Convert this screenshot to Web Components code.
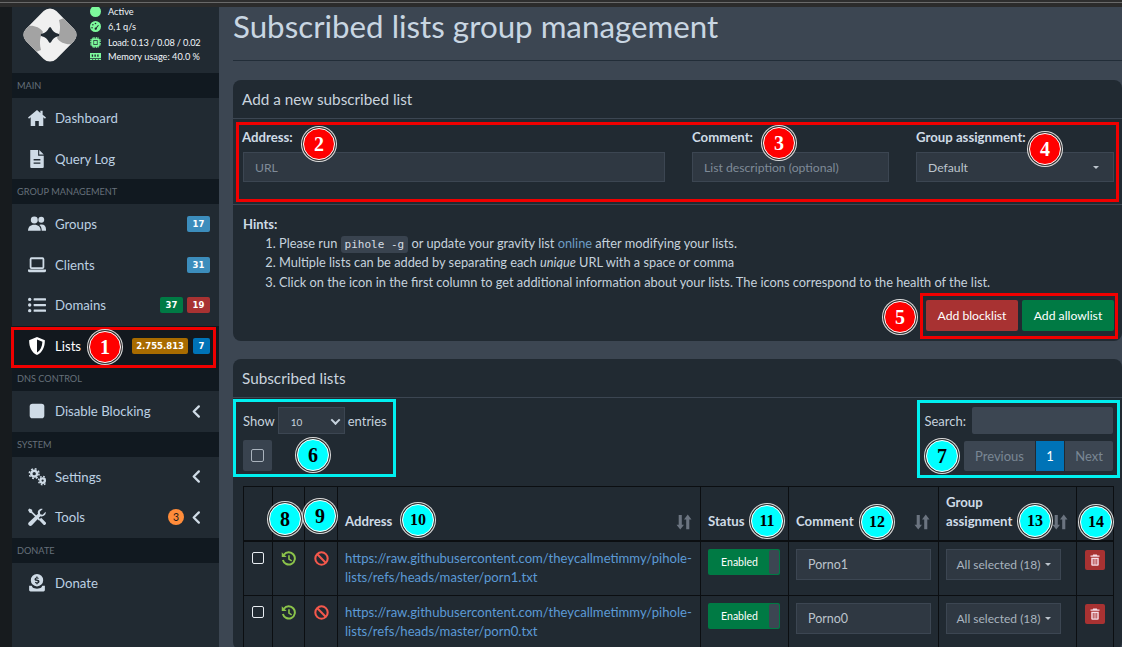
<!DOCTYPE html>
<html lang="en">
<head>
<meta charset="utf-8">
<title>Subscribed lists group management</title>
<style>
  html, body { margin: 0; height: 100%; overflow: hidden; background: #3c4652; }
  body { font: 13px Lato, "Liberation Sans", sans-serif; color: #bcc4cc; }
</style>
</head>
<body>
<pi-app></pi-app>

<script>
const ICONS = {
  home: '<path fill="currentColor" d="M8 .8 0 7.6l.9 1L2.4 7.4V15h4v-4.4h3.2V15h4V7.4l1.5 1.2.9-1L13 5.2V1.6h-2v1.9z"/>',
  file: '<path fill="currentColor" d="M2 0h7v5h5v10a1 1 0 0 1-1 1H3a1 1 0 0 1-1-1zM10 0l4 4h-4zM5 8v1.3h6V8zm0 3v1.3h6V11z" fill-rule="evenodd"/>',
  users: '<g fill="currentColor"><circle cx="5.6" cy="4.4" r="3.1"/><circle cx="11.8" cy="4.2" r="2.6"/><path d="M0 14c0-3.400 2-5.400 5.600-5.400s5.700 2 5.700 5.400z"/><path d="M12.200 14c0-2.400-.7-4-2.100-5.100.7-.3 1.300-.4 2-.4 2.500 0 3.900 1.800 3.900 4.200V14z"/></g>',
  laptop: '<g fill="none" stroke="currentColor" stroke-width="1.600"><rect x="2.300" y="2" width="11.400" height="8.800" rx=".8"/></g><path fill="currentColor" d="M0 12h16v1a1.500 1.500 0 0 1-1.500 1.500h-13A1.500 1.500 0 0 1 0 13z"/>',
  list: '<g fill="currentColor"><circle cx="1.500" cy="3" r="1.500"/><circle cx="1.500" cy="8" r="1.500"/><circle cx="1.500" cy="13" r="1.500"/><rect x="5" y="2" width="11" height="2" rx=".5"/><rect x="5" y="7" width="11" height="2" rx=".5"/><rect x="5" y="12" width="11" height="2" rx=".5"/></g>',
  shield: '<path fill="currentColor" fill-rule="evenodd" d="M8 0 1 2.800C1 9 3.200 13.700 8 16c4.800-2.300 7-7 7-13.200zm0 2.300 4.800 1.900C12.600 8.500 11 12 8 13.700z"/>',
  stop: '<rect x="1.500" y="1.500" width="13" height="13" rx="2.500" fill="currentColor"/>',
  cogs: '<g fill="none" stroke="currentColor"><circle cx="5.500" cy="5" r="2.600" stroke-width="2.200"/><circle cx="5.500" cy="5" r="4.300" stroke-width="1.400" stroke-dasharray="1.700 1.680"/><circle cx="13" cy="11.200" r="2" stroke-width="2"/><circle cx="13" cy="11.200" r="3.600" stroke-width="1.300" stroke-dasharray="1.500 1.330"/></g>',
  tools: '<g fill="currentColor"><path d="M1.300.4 0 1.700l1.400 2.600 1.800.3 6.500 6.500 1.200-1.200L3.900 3.400l-.3-1.800z"/><path d="M15.600 3.300 13 5.900l-2.100-.4-.4-2.100L13.100.8c-1.900-.6-4.200.7-4.400 2.800 0 .6 0 1.100.2 1.500L.8 12.600a1.900 1.900 0 0 0 2.700 2.700l7.500-8c2.500.9 5.500-1.200 4.600-4z"/><path d="m9.800 10.600 1.900-1.900 3.900 3.900a1.300 1.300 0 0 1 0 1.900l-.1.100a1.300 1.300 0 0 1-1.900 0z"/></g>',
  donate: '<path fill="currentColor" fill-rule="evenodd" d="M8 0a5.500 5.500 0 1 1 0 11A5.500 5.500 0 0 1 8 0zM7.400 2.200v.8c-1 .2-1.600.8-1.600 1.600 0 .9.700 1.300 1.500 1.500l1 .3c.3.100.5.200.5.500s-.3.500-.7.500c-.5 0-1-.2-1.400-.5l-.6.800c.4.300.8.500 1.300.6v.9h1.200v-.9c1-.2 1.600-.8 1.600-1.700 0-.9-.7-1.300-1.500-1.500l-1-.3c-.3-.1-.5-.2-.5-.4 0-.3.300-.4.600-.4.400 0 .8.100 1.200.4l.6-.8c-.4-.3-.8-.5-1.200-.5v-.9zM1 10.500h2.300L4 11.800c1 .9 2.500 1.200 4 1.200s3-.3 4-1.200l.7-1.300H15v3.800a1.200 1.200 0 0 1-1.200 1.200H2.200A1.200 1.200 0 0 1 1 14.300z"/>',
  angle: '<path fill="none" stroke="currentColor" stroke-width="2.400" stroke-linecap="round" stroke-linejoin="round" d="M10.500 2.500 5 8l5.500 5.500"/>',
  gauge: '<path fill="currentColor" fill-rule="evenodd" d="M8 0a8 8 0 1 1 0 16A8 8 0 0 1 8 0zm0 2.500a1.200 1.200 0 1 0 0 2.400 1.200 1.200 0 0 0 0-2.400zM4.200 4.500a1.100 1.100 0 1 0 0 2.200 1.100 1.100 0 0 0 0-2.200zm7.600 1.200L8.800 9.400a1.700 1.700 0 1 0 1.100.8l3-3.700zM3 8.800a1.100 1.100 0 1 0 0 2.200 1.100 1.100 0 0 0 0-2.200z"/>',
  chip: '<path fill="currentColor" fill-rule="evenodd" d="M4 0h1.200v2h1.200V0h1.200v2h1.200V0H10v2h1.200V0h1v2A2 2 0 0 1 14 3.800h2V5h-2v1.200h2v1.200h-2v1.200h2v1.200h-2v1.200h2V12h-2a2 2 0 0 1-1.800 2v2h-1v-2H10v2H8.800v-2H7.600v2H6.400v-2H5.200v2H4v-2a2 2 0 0 1-2-2H0v-1.200h2V9.600H0V8.400h2V7.200H0V6h2V4.800H0V3.600h2A2 2 0 0 1 4 2zm1 4.500v7h6v-7z M6 5.500h4v5H6z"/>',
  memory: '<path fill="currentColor" fill-rule="evenodd" d="M0 3h16v7.500H0zm2.500 2v3.500h2V5zm4 0v3.500h2V5zm4 0v3.500h2V5zM0 11.500h3.500V13H0zm4.500 0h3V13h-3zm4 0h3V13h-3zm4 0H16V13h-3.500z"/>',
  history: '<g fill="none" stroke="currentColor" stroke-width="2.100"><path d="M3.100 4A6.500 6.500 0 1 1 2 9.600"/><path stroke-width="1.700" d="M8.500 4.500v4.200l2.900 1.800"/></g><path fill="currentColor" d="M.8 1.300 6 6.300H.8z"/>',
  ban: '<g fill="none" stroke="currentColor" stroke-width="2.200"><circle cx="8" cy="8" r="6.600"/><path d="M3.300 3.300l9.400 9.400"/></g>',
  trash: '<path fill="currentColor" fill-rule="evenodd" d="M5.500.5h5l.6 1.500H14v1.700H2V2h2.900zM3 5h10v9.200A1.500 1.500 0 0 1 11.500 15.700h-7A1.500 1.500 0 0 1 3 14.200zm2 1.500v7.500h1.200V6.500zm2.400 0v7.500h1.200V6.500zm2.400 0v7.500H11V6.500z"/>',
  sort: '<g fill="currentColor"><path d="M2.700 1h3.100v9.800h2.200L4.250 15.600.5 10.800h2.200z"/><path d="M10.200 15.200h3.100V5.400h2.200L11.750.6 8 5.400h2.200z"/></g>'
};

class PiIcon extends HTMLElement {
  connectedCallback() {
    const size = this.getAttribute('size') || 16;
    this.attachShadow({ mode: 'open' });
    this.shadowRoot.innerHTML = `
      <style>
        :host { display: inline-flex; flex: none; width: ${size}px; height: ${size}px; }
        svg { width: 100%; height: 100%; display: block; }
      </style>
      <svg viewBox="0 0 16 16" aria-hidden="true">${ICONS[this.getAttribute('name')] || ''}</svg>`;
  }
}
customElements.define('pi-icon', PiIcon);

class PiNavHeader extends HTMLElement {
  connectedCallback() {
    this.attachShadow({ mode: 'open' });
    this.shadowRoot.innerHTML = `
      <style>
        :host {
          display: flex; align-items: center; height: 25px; padding-left: 5px;
          background: #111920; color: #66707a; font-size: 9.200px; text-transform: uppercase;
        }
      </style>
      <slot></slot>`;
  }
}
customElements.define('pi-nav-header', PiNavHeader);

class PiNavItem extends HTMLElement {
  connectedCallback() {
    this.attachShadow({ mode: 'open' });
    this.shadowRoot.innerHTML = `
      <style>
        :host {
          display: flex; align-items: center; height: 40.500px; padding: 0 9px 0 16px;
          box-sizing: border-box; color: #bcd0e2; font-size: 13.200px;
        }
        :host([active]) { background: #12181e; color: #fff; }
        .ic { width: 27px; display: flex; color: #cfdbe6; }
        :host([active]) .ic { color: #fff; }
        .label { flex: 1; }
        .end { display: flex; align-items: center; gap: 4px; }
        ::slotted(pi-icon) { color: #cfdbe6; margin-right: 6px; }
      </style>
      <span class="ic"><pi-icon name="${this.getAttribute('icon')}" size="${this.getAttribute('size') || 18}"></pi-icon></span>
      <span class="label">${this.getAttribute('label')}</span>
      <span class="end"><slot></slot></span>`;
  }
}
customElements.define('pi-nav-item', PiNavItem);

class PiBadge extends HTMLElement {
  connectedCallback() {
    this.attachShadow({ mode: 'open' });
    this.shadowRoot.innerHTML = `
      <style>
        :host {
          display: inline-flex; align-items: center; justify-content: center; box-sizing: border-box;
          height: 16px; min-width: 23px; padding: 0 4px; border-radius: 2px;
          background: var(--bg, #3c8dbc); color: #fff;
          font: bold 8.500px "DejaVu Sans", sans-serif;
        }
        :host([round]) {
          height: 16px; width: 16px; min-width: 0; padding: 0; border-radius: 50%;
          font: 10.500px Lato, sans-serif; color: #1b1b1b; margin-right: 1px;
        }
      </style>
      <slot></slot>`;
  }
}
customElements.define('pi-badge', PiBadge);

class PiSidebar extends HTMLElement {
  connectedCallback() {
    this.attachShadow({ mode: 'open' });
    this.shadowRoot.innerHTML = `
      <style>
        :host { display: block; background: #212a32; overflow: hidden; }
        .panel { display: flex; height: 66px; box-sizing: border-box; padding-left: 11px; }
        .logo { width: 54px; height: 56px; flex: none; }
        .status {
          margin-left: 13px; display: flex; flex-direction: column;
          font: 9.200px Lato, sans-serif; color: #f2f6fa;
        }
        .status div { display: flex; align-items: center; height: 15px; gap: 7px; }
        .status pi-icon { color: #7dfa9c; width: 11px; }
        .dot { width: 11px; height: 11px; border-radius: 50%; background: #7dfa9c; flex: none; }
      </style>
      <div class="panel">
        <svg class="logo" viewBox="0 0 54 56" aria-hidden="true">
          <defs><clipPath id="diamond"><rect x="5.600" y="6.600" width="42.800" height="42.800" rx="9" transform="rotate(45 27 28)"/></clipPath></defs>
          <g clip-path="url(#diamond)">
            <rect width="54" height="56" fill="#f0f0f0"/>
            <path fill="#a3a3a3" d="M-2 28 5 19C10 18 17 20 20 25 17 29 16 36 18 43L13 45-2 35z"/>
            <path fill="#a3a3a3" transform="rotate(180 27 28)" d="M-2 28 5 19C10 18 17 20 20 25 17 29 16 36 18 43L13 45-2 35z"/>
          </g>
          <path fill="#212a32" d="M27 21.500C28.500 25 30.500 27 35 28 30.500 29 28.500 31 27 34.500 25.500 31 23.500 29 19 28 23.500 27 25.500 25 27 21.500z" stroke="#212a32" stroke-width="2.500" stroke-linejoin="round"/>
        </svg>
        <div class="status">
          <div style="height:12px;margin-top:-2px"><span class="dot"></span>Active</div>
          <div style="height:18px"><pi-icon name="gauge" size="11"></pi-icon>6,1 q/s</div>
          <div style="height:14px"><pi-icon name="chip" size="11"></pi-icon><span style="letter-spacing:-.15px">Load: 0.13 / 0.08 / 0.02</span></div>
          <div><pi-icon name="memory" size="11"></pi-icon>Memory usage: 40.0 %</div>
        </div>
      </div>
      <pi-nav-header>Main</pi-nav-header>
      <pi-nav-item icon="home" label="Dashboard"></pi-nav-item>
      <pi-nav-item icon="file" label="Query Log"></pi-nav-item>
      <pi-nav-header>Group Management</pi-nav-header>
      <pi-nav-item icon="users" label="Groups"><pi-badge>17</pi-badge></pi-nav-item>
      <pi-nav-item icon="laptop" label="Clients"><pi-badge>31</pi-badge></pi-nav-item>
      <pi-nav-item icon="list" label="Domains"><pi-badge style="--bg:#007a44">37</pi-badge><pi-badge style="--bg:#a83232">19</pi-badge></pi-nav-item>
      <pi-nav-item icon="shield" label="Lists" active><pi-badge style="--bg:#a86b00;margin-right:1px">2.755.813</pi-badge><pi-badge style="--bg:#0073b7;min-width:17px">7</pi-badge></pi-nav-item>
      <pi-nav-header>DNS Control</pi-nav-header>
      <pi-nav-item icon="stop" label="Disable Blocking"><pi-icon name="angle" size="15"></pi-icon></pi-nav-item>
      <pi-nav-header>System</pi-nav-header>
      <pi-nav-item icon="cogs" label="Settings"><pi-icon name="angle" size="15"></pi-icon></pi-nav-item>
      <pi-nav-item icon="tools" label="Tools"><pi-badge round style="--bg:#ff8c3a">3</pi-badge><pi-icon name="angle" size="15"></pi-icon></pi-nav-item>
      <pi-nav-header>Donate</pi-nav-header>
      <pi-nav-item icon="donate" label="Donate"></pi-nav-item>`;
  }
}
customElements.define('pi-sidebar', PiSidebar);

class PiCard extends HTMLElement {
  connectedCallback() {
    this.attachShadow({ mode: 'open' });
    this.shadowRoot.innerHTML = `
      <style>
        :host { display: block; background: #212a32; border-radius: 8px; }
        header {
          height: 38px; padding-left: 9px; display: flex; align-items: center;
          border-bottom: 1px solid #3c4652; font-size: 15.300px; color: #c9d4de;
        }
      </style>
      <header>${this.getAttribute('heading')}</header>
      <slot></slot>`;
  }
}
customElements.define('pi-card', PiCard);

class PiAddForm extends HTMLElement {
  connectedCallback() {
    this.attachShadow({ mode: 'open' });
    this.shadowRoot.innerHTML = `
      <style>
        :host { display: block; color: #bcd0e2; }
        .fields {
          display: grid; grid-template-columns: 422px 197px 198px; column-gap: 27px;
          padding: 10px 8px 0 10px; height: 75px; border-bottom: 1px solid #3c4652;
        }
        label { display: block; font-weight: bold; font-size: 13.200px; color: #cfdbe6; line-height: 17px; margin: 0 0 6px; }
        .control {
          height: 30px; box-sizing: border-box; display: flex; align-items: center; padding: 0 11px;
          background: #2f3842; border: 1px solid #3c4652; color: #7f8b98; font-size: 12.200px;
        }
        .control.sel { color: #bcc4cc; justify-content: space-between; }
        .caret { width: 0; height: 0; border: 3.500px solid transparent; border-top-color: #bcc4cc; border-bottom: 0; margin-right: 3px; }
        .hints { padding: 10px 10px 0; font-size: 13px; line-height: 19.500px; color: #c6d2dd; height: 136px; box-sizing: border-box; }
        .hints b { color: #cfdbe6; }
        ol { margin: -1px 0 0; padding-left: 36px; font-size: 12.800px; }
        code {
          font: 11px "DejaVu Sans Mono", monospace; background: #39434f; padding: 2px 4px;
          border-radius: 3px; color: #d5dce3;
        }
        a { color: #6d9dc5; text-decoration: none; }
        .actions { display: flex; justify-content: flex-end; gap: 4px; margin: 8px -2px 0 0; }
        button {
          width: 92px; height: 31px; border: 0; border-radius: 2px; color: #fff;
          font: 12.200px Lato, sans-serif; padding: 0;
        }
      </style>
      <div class="fields">
        <div><label style="margin-left:-1px">Address:</label><div class="control">URL</div></div>
        <div><label>Comment:</label><div class="control">List description (optional)</div></div>
        <div><label>Group assignment:</label><div class="control sel">Default<span class="caret"></span></div></div>
      </div>
      <div class="hints">
        <b>Hints:</b>
        <ol>
          <li>Please run <code>pihole -g</code> or update your gravity list <a>online</a> after modifying your lists.</li>
          <li>Multiple lists can be added by separating each <i>unique</i> URL with a space or comma</li>
          <li>Click on the icon in the first column to get additional information about your lists. The icons correspond to the health of the list.</li>
        </ol>
        <div class="actions">
          <button style="background:#a83232">Add blocklist</button>
          <button style="background:#007a44">Add allowlist</button>
        </div>
      </div>`;
  }
}
customElements.define('pi-add-form', PiAddForm);

class PiListsTable extends HTMLElement {
  row(url1, url2, comment) {
    return `<tr>
      <td class="c"><span class="check"></span></td>
      <td class="c"><pi-icon name="history" size="15" style="color:#8bc34a"></pi-icon></td>
      <td class="c"><pi-icon name="ban" size="15" style="color:#f4584c"></pi-icon></td>
      <td class="addr"><a>${url1}<br>${url2}</a></td>
      <td><div class="toggle"><span>Enabled</span><i></i></div></td>
      <td><div class="inp">${comment}</div></td>
      <td><div class="inp drop">All selected (18)<span class="caret"></span></div></td>
      <td class="c"><span class="del"><pi-icon name="trash" size="12"></pi-icon></span></td>
    </tr>`;
  }
  connectedCallback() {
    this.attachShadow({ mode: 'open' });
    this.shadowRoot.innerHTML = `
      <style>
        :host { display: block; padding: 0 9px 0 10px; }
        .top { display: flex; justify-content: space-between; height: 88px; padding-top: 9px; box-sizing: border-box; color: #c6d2dd; font-size: 13px; }
        .row { display: flex; align-items: center; height: 27px; gap: 3px; }
        .sel {
          width: 67px; height: 27px; box-sizing: border-box; background: #2f3842; border: 1px solid #3c4652;
          display: flex; align-items: center; justify-content: space-between; padding: 2px 5px 0 12px; font-size: 10px; color: #c6d2dd;
        }
        .chev { width: 5px; height: 5px; border: solid #c6d2dd; border-width: 0 2px 2px 0; transform: rotate(45deg) translate(-1px,-1px); }
        .sq { width: 29px; height: 31px; margin-top: 6px; background: #39434f; border-radius: 2px; display: flex; align-items: center; justify-content: center; }
        .sq span { width: 11px; height: 11px; border: 1.500px solid #aab3bd; border-radius: 2px; }
        .right { display: flex; flex-direction: column; align-items: flex-end; }
        .search { width: 141px; height: 27px; background: #3c4652; border-radius: 2px; margin-left: 3px; }
        .pager { display: flex; height: 30px; margin-top: 7px; gap: 1px; font-size: 13px; color: #7a8794; }
        .pager span { display: flex; align-items: center; justify-content: center; background: #3c4652; }
        table { border-collapse: collapse; table-layout: fixed; width: 870px; }
        th, td { border: 1px solid #0b0e11; padding: 0 7px; }
        th {
          height: 44px; text-align: left; vertical-align: bottom; padding-bottom: 9px; font-size: 13.200px; line-height: 19px;
          color: #cfdbe6; border-bottom-width: 2px; position: relative;
        }
        th pi-icon { position: absolute; right: 8px; bottom: 10px; color: #6b7480; }
        td { height: 54px; vertical-align: top; padding-top: 7px; box-sizing: border-box; }
        td.c { text-align: center; padding-left: 0; padding-right: 0; }
        td.c pi-icon { vertical-align: top; margin-top: 2px; }
        td.addr { padding: 0 6px 0 7px; vertical-align: middle; line-height: 19.500px; font-size: 13.100px; }
        a { color: #5c9ad6; }
        .check { display: inline-block; width: 10px; height: 10px; border: 1px solid #e8edf2; border-radius: 2px; margin-top: 3px; }
        .toggle {
          width: 72px; height: 26px; background: #007a44; border-radius: 2px; display: flex; align-items: center;
          color: #fff; font-size: 10.500px;
        }
        .toggle span { flex: 1; text-align: center; padding-left: 2px; }
        .toggle i { flex: none; width: 10px; height: 24px; background: #3c4652; border-radius: 2px; margin-right: 1px; }
        .inp {
          height: 31px; box-sizing: border-box; background: #2f3842; border: 1px solid #3c4652; display: flex;
          align-items: center; padding: 0 11px; font-size: 12.500px; color: #bcc4cc;
        }
        .drop { justify-content: center; gap: 4px; padding: 0; font-size: 12px; color: #a9b4bf; width: 115px; }
        .caret { width: 0; height: 0; border: 3px solid transparent; border-top-color: #bcc4cc; border-bottom: 0; }
        .del { display: inline-flex; width: 20px; height: 20px; background: #a83232; border-radius: 2px; align-items: center; justify-content: center; color: #f5dce6; margin-top: 1px; }
        .del pi-icon { margin-top: 0 !important; }
      </style>
      <div class="top">
        <div>
          <div class="row">Show <div class="sel">10<span class="chev"></span></div> entries</div>
          <div class="sq"><span></span></div>
        </div>
        <div class="right">
          <div class="row">Search: <div class="search"></div></div>
          <div class="pager">
            <span style="width:71px;border-radius:2px 0 0 2px">Previous</span>
            <span style="width:28px;background:#0073b7;color:#fff">1</span>
            <span style="width:48px;border-radius:0 2px 2px 0">Next</span>
          </div>
        </div>
      </div>
      <table>
        <colgroup>
          <col style="width:29px"><col style="width:32px"><col style="width:33px"><col style="width:363px">
          <col style="width:88px"><col style="width:150px"><col style="width:138px"><col style="width:37px">
        </colgroup>
        <thead>
          <tr>
            <th></th><th></th><th></th>
            <th>Address<pi-icon name="sort" size="16"></pi-icon></th>
            <th>Status</th>
            <th>Comment<pi-icon name="sort" size="16"></pi-icon></th>
            <th>Group<br>assignment<pi-icon name="sort" size="16"></pi-icon></th>
            <th></th>
          </tr>
        </thead>
        <tbody>
          ${this.row('https://raw.githubusercontent.com/theycallmetimmy/pihole-', 'lists/refs/heads/master/porn1.txt', 'Porno1')}
          ${this.row('https://raw.githubusercontent.com/theycallmetimmy/pihole-', 'lists/refs/heads/master/porn0.txt', 'Porno0')}
        </tbody>
      </table>`;
  }
}
customElements.define('pi-lists-table', PiListsTable);

// numbered markers and frames drawn over the screenshot
class PiMarker extends HTMLElement {
  connectedCallback() {
    const [x, y] = this.getAttribute('at').split(',').map(Number);
    const cyan = this.hasAttribute('cyan');
    this.attachShadow({ mode: 'open' });
    this.shadowRoot.innerHTML = `
      <style>
        :host {
          position: absolute; left: ${x - 16}px; top: ${y - 16}px; width: 32px; height: 32px; box-sizing: border-box;
          display: flex; align-items: center; justify-content: center; border-radius: 50%;
          background: ${cyan ? '#00ffff' : '#ff0000'}; color: ${cyan ? '#000' : '#fff'};
          border: 1px solid #fff; box-shadow: 0 0 0 1px #333, 0 0 0 2px #ddd;
          font: bold ${this.textContent.length > 1 ? 16 : 20}px "Liberation Serif", serif;
        }
      </style>
      <slot></slot>`;
  }
}
customElements.define('pi-marker', PiMarker);

class PiFrame extends HTMLElement {
  connectedCallback() {
    const [x, y, w, h] = this.getAttribute('box').split(',').map(Number);
    this.attachShadow({ mode: 'open' });
    this.shadowRoot.innerHTML = `
      <style>
        :host {
          position: absolute; left: ${x}px; top: ${y}px; width: ${w}px; height: ${h}px; box-sizing: border-box;
          border: 3px solid ${this.getAttribute('color')}; pointer-events: none;
        }
      </style>`;
  }
}
customElements.define('pi-frame', PiFrame);

class PiApp extends HTMLElement {
  connectedCallback() {
    this.attachShadow({ mode: 'open' });
    this.shadowRoot.innerHTML = `
      <style>
        :host { display: block; position: relative; width: 1122px; height: 647px; overflow: hidden; }
        .chrome { height: 7px; background: linear-gradient(#2e2e2e 0 2px, #6a6a6a 2px 3px, #2b2b2b 3px); }
        .shell { display: grid; grid-template-columns: 12px 207px 1fr; height: 640px; }
        .gutter { background: #171b1e; }
        main { padding-left: 14px; min-width: 0; }
        h1 {
          margin: 0; height: 54px; box-sizing: border-box; border-bottom: 1px solid #222d38;
          font-weight: 400; font-size: 31.300px; line-height: 39px; color: #c9d6e2;
        }
        .gap1 { height: 19px; }
        .gap2 { height: 18px; }
      </style>
      <div class="chrome"></div>
      <div class="shell">
        <div class="gutter"></div>
        <pi-sidebar></pi-sidebar>
        <main>
          <h1>Subscribed lists group management</h1>
          <div class="gap1"></div>
          <pi-card heading="Add a new subscribed list"><pi-add-form></pi-add-form></pi-card>
          <div class="gap2"></div>
          <pi-card heading="Subscribed lists"><pi-lists-table></pi-lists-table></pi-card>
        </main>
      </div>
      <pi-frame box="11,327,205,41" color="#f00000"></pi-frame>
      <pi-frame box="236,122,883,80" color="#f00000"></pi-frame>
      <pi-frame box="920,293,198,46" color="#f00000"></pi-frame>
      <pi-frame box="233,399,163,78" color="#00f0f0"></pi-frame>
      <pi-frame box="917,400,203,78" color="#00f0f0"></pi-frame>
      <pi-marker at="105,347">1</pi-marker>
      <pi-marker at="319,144">2</pi-marker>
      <pi-marker at="779,143">3</pi-marker>
      <pi-marker at="1045,149">4</pi-marker>
      <pi-marker at="900,317">5</pi-marker>
      <pi-marker cyan at="313,455">6</pi-marker>
      <pi-marker cyan at="942,456">7</pi-marker>
      <pi-marker cyan at="285,519">8</pi-marker>
      <pi-marker cyan at="320,516">9</pi-marker>
      <pi-marker cyan at="418,520">10</pi-marker>
      <pi-marker cyan at="767,521">11</pi-marker>
      <pi-marker cyan at="877,522">12</pi-marker>
      <pi-marker cyan at="1035,521">13</pi-marker>
      <pi-marker cyan at="1096,522">14</pi-marker>`;
  }
}
customElements.define('pi-app', PiApp);
</script>
</body>
</html>
